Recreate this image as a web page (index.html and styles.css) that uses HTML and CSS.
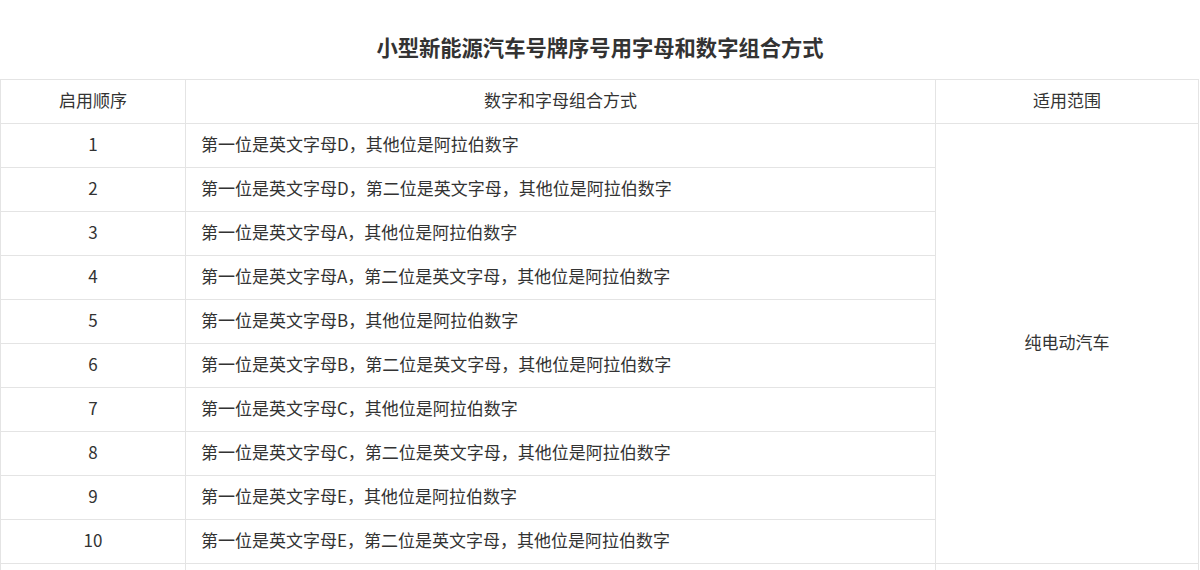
FILE: index.html
```html
<!DOCTYPE html>
<html lang="zh-CN">
<head>
<meta charset="utf-8">
<link rel="stylesheet" href="styles.css">
</head>
<body>
<div class="page">
  <h1 class="title">小型新能源汽车号牌序号用字母和数字组合方式</h1>
  <table class="plate-table">
    <colgroup>
      <col class="c-order">
      <col class="c-combo">
      <col class="c-scope">
    </colgroup>
    <thead>
      <tr><th>启用顺序</th><th>数字和字母组合方式</th><th>适用范围</th></tr>
    </thead>
    <tbody>
      <tr><td class="num">1</td><td class="txt">第一位是英文字母D，其他位是阿拉伯数字</td><td class="scope" rowspan="10">纯电动汽车</td></tr>
      <tr><td class="num">2</td><td class="txt">第一位是英文字母D，第二位是英文字母，其他位是阿拉伯数字</td></tr>
      <tr><td class="num">3</td><td class="txt">第一位是英文字母A，其他位是阿拉伯数字</td></tr>
      <tr><td class="num">4</td><td class="txt">第一位是英文字母A，第二位是英文字母，其他位是阿拉伯数字</td></tr>
      <tr><td class="num">5</td><td class="txt">第一位是英文字母B，其他位是阿拉伯数字</td></tr>
      <tr><td class="num">6</td><td class="txt">第一位是英文字母B，第二位是英文字母，其他位是阿拉伯数字</td></tr>
      <tr><td class="num">7</td><td class="txt">第一位是英文字母C，其他位是阿拉伯数字</td></tr>
      <tr><td class="num">8</td><td class="txt">第一位是英文字母C，第二位是英文字母，其他位是阿拉伯数字</td></tr>
      <tr><td class="num">9</td><td class="txt">第一位是英文字母E，其他位是阿拉伯数字</td></tr>
      <tr><td class="num">10</td><td class="txt">第一位是英文字母E，第二位是英文字母，其他位是阿拉伯数字</td></tr>
      <tr><td class="num">11</td><td class="txt">第一位是英文字母F，其他位是阿拉伯数字</td><td class="scope">非纯电动汽车</td></tr>
    </tbody>
  </table>
</div>
</body>
</html>
```
FILE: styles.css
```css
html, body {
  margin: 0;
  padding: 0;
  background: #fff;
}
body {
  font-family: "Microsoft YaHei", "Noto Sans CJK SC", "Liberation Sans", sans-serif;
  color: #333;
}
.page {
  width: 1200px;
}
.title {
  margin: 0;
  height: 79px;
  box-sizing: border-box;
  padding-top: 33px;
  font-size: 21.3px;
  line-height: 28px;
  font-weight: bold;
  text-align: center;
  color: #333;
}
.plate-table {
  width: 1198px;
  border-collapse: collapse;
  table-layout: fixed;
  font-size: 17px;
}
.c-order { width: 185px; }
.c-combo { width: 750px; }
.c-scope { width: 263px; }
.plate-table th,
.plate-table td {
  border: 1px solid #e4e4e4;
  height: 44px;
  padding: 0 0 3px 0;
  box-sizing: border-box;
  vertical-align: middle;
  font-weight: normal;
  line-height: 24px;
}
.plate-table th {
  text-align: center;
}
.num {
  text-align: center;
}
.plate-table .txt {
  text-align: left;
  padding-left: 15px;
}
.scope {
  text-align: center;
}
```
